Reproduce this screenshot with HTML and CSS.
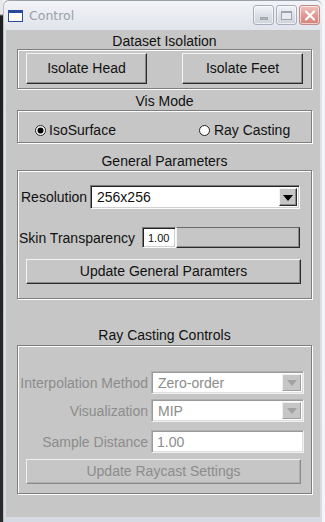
FILE: index.html
```html
<!DOCTYPE html>
<html>
<head>
<meta charset="utf-8">
<link rel="stylesheet" href="styles.css">
</head>
<body>
<div class="strip"></div>
<div class="window">
  <div class="titlebar">
    <svg class="appicon" width="15" height="12" viewBox="0 0 15 12"><rect x="0.5" y="0.5" width="14" height="11" fill="#fff" stroke="#2b4a9a"/><rect x="1" y="1" width="13" height="2" fill="#2b4a9a"/></svg>
    <span class="title">Control</span>
    <div class="wbtns">
      <div class="wbtn min"><span class="dash"></span></div>
      <div class="wbtn max"><span class="sq"></span></div>
      <div class="wbtn close"><svg width="12" height="11" viewBox="0 0 12 11"><path d="M2 1.5 L10 9.5 M10 1.5 L2 9.5" stroke="#fff" stroke-width="2.2" stroke-linecap="round"/></svg></div>
    </div>
  </div>
  <div class="client">
    <div class="legend l1">Dataset Isolation</div>
    <div class="group g1">
      <div class="btn b-iso">Isolate Head</div>
      <div class="btn b-iso">Isolate Feet</div>
    </div>

    <div class="legend l2">Vis Mode</div>
    <div class="group g2">
      <div class="radio r1">
        <svg width="11" height="11" viewBox="0 0 11 11"><circle cx="5.5" cy="5.5" r="5" fill="#fff" stroke="#222"/><circle cx="5.5" cy="5.5" r="3" fill="#000"/></svg>
        <span>IsoSurface</span>
      </div>
      <div class="radio r2">
        <svg width="11" height="11" viewBox="0 0 11 11"><circle cx="5.5" cy="5.5" r="5" fill="#fff" stroke="#222"/></svg>
        <span>Ray Casting</span>
      </div>
    </div>

    <div class="legend l3">General Parameters</div>
    <div class="group g3">
      <div class="row row-res">
        <span class="lbl">Resolution</span>
        <div class="combo combo-res"><span class="val">256x256</span><div class="arrow"><span class="tri"></span></div></div>
      </div>
      <div class="row row-skin">
        <span class="lbl lbl-skin">Skin Transparency</span>
        <div class="entry small">1.00</div>
        <div class="trough"></div>
      </div>
      <div class="btn wide b-gen">Update General Paramters</div>
    </div>

    <div class="legend l4">Ray Casting Controls</div>
    <div class="group g4">
      <div class="frow fr1">
        <span class="dlbl">Interpolation Method</span>
        <div class="combo dis"><span class="val">Zero-order</span><div class="arrow"><span class="tri"></span></div></div>
      </div>
      <div class="frow fr2">
        <span class="dlbl">Visualization</span>
        <div class="combo dis"><span class="val">MIP</span><div class="arrow"><span class="tri"></span></div></div>
      </div>
      <div class="frow fr3">
        <span class="dlbl">Sample Distance</span>
        <div class="entry dis-entry">1.00</div>
      </div>
      <div class="btn wide disbtn">Update Raycast Settings</div>
    </div>
  </div>
</div>
<div class="rstrip"></div>
</body>
</html>
```

FILE: styles.css
```css
* { box-sizing: border-box; }
html, body { margin: 0; padding: 0; }
body {
  width: 325px;
  height: 522px;
  overflow: hidden;
  display: flex;
  background: #f2f3f5;
  font-family: "Liberation Sans", Arial, sans-serif;
  font-size: 14px;
  color: #111;
}
.strip {
  width: 3px;
  height: 522px;
  background: linear-gradient(#e8e8e8 0, #e8e8e8 14px, #1e1e1e 16px, #2a2a2a);
}
.rstrip { width: 3px; height: 522px; background: #f4f5f7; }
.window {
  width: 319px;
  height: 522px;
  display: flex;
  flex-direction: column;
  background: linear-gradient(#f3f4f8 0, #dfe3ea 30px, #d6dae2 100%);
  border-radius: 6px 6px 0 0;
  border-top: 1px solid #9aa0aa;
  border-left: 1px solid #b8bdc6;
}
.titlebar {
  height: 29px;
  display: flex;
  align-items: center;
  padding-left: 4px;
}
.appicon { display: block; margin-top: 1px; }
.title {
  margin-left: 6px;
  font-family: "DejaVu Sans", sans-serif;
  font-size: 12.5px;
  color: #9a9fa8;
}
.wbtns {
  margin-left: auto;
  display: flex;
  gap: 2px;
  margin-right: 2px;
  align-self: flex-start;
  margin-top: 4px;
}
.wbtn {
  width: 21px;
  height: 20px;
  border-radius: 3px;
  border: 1px solid #a8adb8;
  background: linear-gradient(#f4f5f8, #dcdfe6 50%, #cfd3dc);
  display: flex;
  align-items: center;
  justify-content: center;
  box-shadow: inset 0 0 0 1px rgba(255,255,255,0.6);
}
.wbtn .dash { width: 8px; height: 3px; background: #b4b8c2; border: 1px solid #9ea3ae; margin-top: 7px; }
.wbtn .sq { width: 11px; height: 9px; border: 1px solid #9ea3ae; border-top-width: 2px; background: #e9ebf0; }
.wbtn.close {
  width: 21px;
  border-color: #c08a86;
  background: linear-gradient(#f2c4bf, #e09a93 50%, #d5837b);
}
.client {
  margin: 0 2px 0 2px;
  height: 487px;
  background: #c6c6c6;
  padding: 3px 8px 0 11px;
}
.legend {
  height: 16px;
  line-height: 16px;
  text-align: center;
  font-size: 14px;
  color: #111;
}
.l1 { margin-bottom: 0; }
.l2 { margin-top: 4px; margin-bottom: 1px; }
.l3 { margin-top: 10px; margin-bottom: 1px; }
.l4 { margin-top: 28px; margin-bottom: 2px; }
.group {
  border: 1px solid #7e7e7e;
  box-shadow: inset 1px 1px 0 #fff, 1px 1px 0 #fff;
}
.g1 {
  height: 40px;
  padding: 3px 8px 0 8px;
  display: flex;
  justify-content: space-between;
  align-items: flex-start;
}
.btn {
  height: 31px;
  display: flex;
  align-items: center;
  justify-content: center;
  border: 1px solid;
  border-color: #f4f4f4 #2a2a2a #2a2a2a #f4f4f4;
  box-shadow: inset -1px -1px 0 #8a8a8a;
  background: #c6c6c6;
  font-size: 14px;
  color: #111;
  padding-bottom: 1px;
}
.b-iso { width: 121px; }
.g2 {
  height: 33px;
  padding: 11px 0 0 17px;
  display: flex;
  align-items: flex-start;
}
.radio { display: flex; align-items: center; height: 16px; }
.radio svg { display: block; }
.radio span { margin-left: 3px; }
.r2 { margin-left: 83px; }
.r2 span { margin-left: 4px; }
.g3 {
  height: 129px;
  padding: 14px 0 0 0;
}
.row { display: flex; align-items: center; }
.row-res { height: 24px; padding-left: 3px; }
.row-res .lbl { width: 69px; }
.combo {
  position: relative;
  display: flex;
  align-items: center;
  background: #fff;
  border: 1px solid;
  border-color: #7a7a7a #fafafa #fafafa #7a7a7a;
  box-shadow: inset 1px 1px 0 #222, inset -1px -1px 0 #d0d0d0;
  padding: 2px;
}
.combo .val { flex: 1; padding-left: 4px; line-height: 18px; }
.combo-res { width: 210px; height: 24px; }
.arrow {
  width: 18px;
  height: 100%;
  background: #c6c6c6;
  border: 1px solid;
  border-color: #f4f4f4 #2a2a2a #2a2a2a #f4f4f4;
  box-shadow: inset -1px -1px 0 #8a8a8a;
  display: flex;
  align-items: center;
  justify-content: center;
}
.tri {
  width: 0; height: 0;
  border-left: 5px solid transparent;
  border-right: 5px solid transparent;
  border-top: 6px solid #000;
  margin-top: 1px;
}
.row-skin { height: 21px; margin-top: 18px; padding-left: 1px; }
.lbl-skin { width: 123px; }
.entry {
  background: #fff;
  border: 1px solid;
  border-color: #7a7a7a #fafafa #fafafa #7a7a7a;
  box-shadow: inset 1px 1px 0 #222, inset -1px -1px 0 #d0d0d0;
  display: flex;
  align-items: center;
}
.entry.small { width: 34px; height: 21px; font-size: 11px; padding-left: 5px; padding-top: 1px; }
.trough {
  width: 124px;
  height: 21px;
  background: #c6c6c6;
  border: 1px solid;
  border-color: #6a6a6a #2a2a2a #2a2a2a #f4f4f4;
  box-shadow: inset -1px -1px 0 #8a8a8a;
}
.btn.wide { width: 275px; height: 25px; margin-left: 8px; }
.b-gen { margin-top: 11px; }
.g4 {
  height: 149px;
  padding: 25px 0 0 0;
}
.frow { display: flex; align-items: center; height: 23px; }
.fr2 { margin-top: 5px; }
.fr3 { margin-top: 8px; }
.dlbl {
  width: 130px;
  text-align: right;
  color: #8c8c8c;
  margin-right: 3px;
}
.combo.dis {
  width: 153px;
  height: 23px;
  border-color: #b0b0b0 #f0f0f0 #f0f0f0 #b0b0b0;
  box-shadow: inset 1px 1px 0 #9a9a9a, inset -1px -1px 0 #e0e0e0;
  color: #8c8c8c;
}
.combo.dis .arrow {
  width: 19px;
  border-color: #f0f0f0 #a0a0a0 #a0a0a0 #f0f0f0;
  box-shadow: none;
}
.combo.dis .tri { border-top-color: #a2a2a2; }
.entry.dis-entry {
  width: 153px;
  height: 23px;
  color: #8c8c8c;
  padding-left: 5px;
  border-color: #b0b0b0 #f0f0f0 #f0f0f0 #b0b0b0;
  box-shadow: inset 1px 1px 0 #9a9a9a, inset -1px -1px 0 #e0e0e0;
}
.disbtn {
  margin-top: 6px;
  color: #8c8c8c;
  border-color: #f0f0f0 #8a8a8a #8a8a8a #f0f0f0;
  box-shadow: inset -1px -1px 0 #b0b0b0;
}
```
